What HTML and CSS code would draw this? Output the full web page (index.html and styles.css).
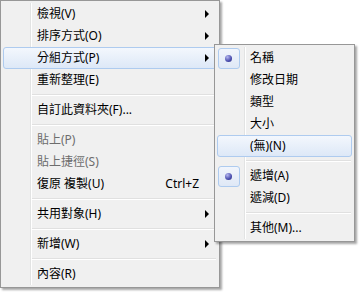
FILE: index.html
```html
<!DOCTYPE html>
<html lang="zh-TW">
<head>
  <meta charset="UTF-8" />
  <title>右鍵選單</title>
  <link rel="stylesheet" href="styles.css">
</head>
<body>
  <div class="stage">
    <ul class="menu main">
      <li class="item sub">檢視(V)</li>
      <li class="item sub">排序方式(O)</li>
      <li class="item sub hover">分組方式(P)</li>
      <li class="item">重新整理(E)</li>
      <li class="sep"></li>
      <li class="item">自訂此資料夾(F)...</li>
      <li class="sep"></li>
      <li class="item off">貼上(P)</li>
      <li class="item off">貼上捷徑(S)</li>
      <li class="item">復原 複製(U)<span class="key">Ctrl+Z</span></li>
      <li class="sep"></li>
      <li class="item sub">共用對象(H)</li>
      <li class="sep"></li>
      <li class="item sub">新增(W)</li>
      <li class="sep"></li>
      <li class="item">內容(R)</li>
    </ul>

    <ul class="menu side">
      <li class="item checked">名稱</li>
      <li class="item">修改日期</li>
      <li class="item">類型</li>
      <li class="item">大小</li>
      <li class="item hover">(無)(N)</li>
      <li class="sep"></li>
      <li class="item checked">遞增(A)</li>
      <li class="item">遞減(D)</li>
      <li class="sep"></li>
      <li class="item">其他(M)...</li>
    </ul>
  </div>
</body>
</html>
```

FILE: styles.css
```css
body {
  margin: 0;
  background-color: #FFFFFF;
  font-family: "Noto Sans", "Noto Sans CJK TC", sans-serif;
  font-size: 12px;
  color: #000000;
}
.stage {
  position: relative;
  width: 361px;
  height: 292px;
  overflow: hidden;
}
.menu {
  list-style: none;
  margin: 0;
  padding: 2px;
  background-color: #F0F0F0;
  border: 1px solid #979797;
  box-shadow: 2px 2px 2px rgba(0,0,0,0.35);
  position: relative;
}
/* icon gutter line */
.menu::before {
  content: "";
  position: absolute;
  top: 2px;
  bottom: 2px;
  left: 29px;
  width: 1px;
  background-color: #E2E3E3;
  border-right: 1px solid #FFFFFF;
}
.main {
  width: 214px;
}
.side {
  position: absolute;
  left: 214px;
  top: 44px;
  width: 135px;
}
.item {
  position: relative;
  height: 22px;
  line-height: 20px;
  padding-left: 33px;
  border: 1px solid transparent;
  border-radius: 3px;
  box-sizing: border-box;
  white-space: nowrap;
}
.side .item {
  padding-left: 32px;
}
.item.hover {
  border-color: #AECBEF;
  background: linear-gradient(#F3F7FD, #DDE8F7);
}
.item.off {
  color: #6D6D6D;
}
.key {
  position: absolute;
  right: 17px;
}
.sub::after {
  content: "";
  position: absolute;
  right: 7px;
  top: 6px;
  border-left: 4px solid #000000;
  border-top: 4px solid transparent;
  border-bottom: 4px solid transparent;
}
.checked::before {
  content: "";
  position: absolute;
  left: 0;
  top: 0;
  width: 20px;
  height: 19px;
  border: 1px solid #AECBEF;
  border-radius: 3px;
  background: linear-gradient(#F1F5FC, #DFE8F6);
}
.checked::after {
  content: "";
  position: absolute;
  left: 7px;
  top: 7px;
  width: 7px;
  height: 7px;
  border-radius: 50%;
  background: radial-gradient(circle at 35% 30%, #B6B8F0, #4A4DAE 60%, #2B2D7A);
}
.sep {
  position: relative;
  height: 8px;
}
.sep::before {
  content: "";
  position: absolute;
  left: 29px;
  right: 1px;
  top: 3px;
  height: 1px;
  background-color: #E0E0E0;
  border-bottom: 1px solid #FFFFFF;
}
```
